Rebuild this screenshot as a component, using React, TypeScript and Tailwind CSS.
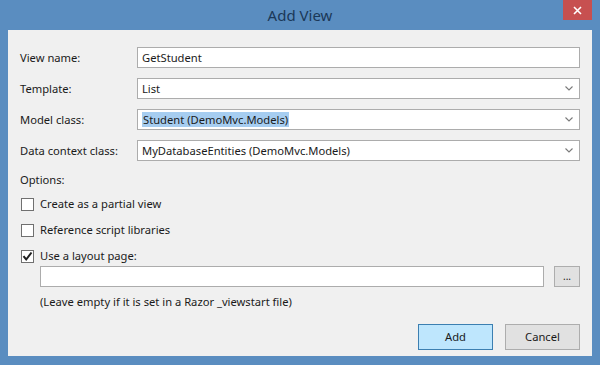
import React from 'react';

// ─── Small pieces ─────────────────────────────────────────────────────────────

const Chevron: React.FC = () => (
  <svg width="8" height="5" viewBox="0 0 8 5" className="shrink-0" aria-hidden="true">
    <path d="M0.5 0.5 L4 4 L7.5 0.5" fill="none" stroke="#7a7a7a" strokeWidth="1.1" />
  </svg>
);

interface FieldRowProps {
  label: string;
  value: string;
  combo?: boolean;
  selected?: boolean;
}

const FieldRow: React.FC<FieldRowProps> = (props) => {
  const valueClass = props.selected
    ? 'bg-[#a6cdf0] text-[#1a1a1a] px-[1px] leading-[15px]'
    : 'text-[#1a1a1a]';
  return (
    <div className="flex items-center h-[21px]">
      <div className="w-[117px] shrink-0 text-[#1a1a1a]">{props.label}</div>
      <div className="flex-1 h-full flex items-center justify-between bg-white border border-[#acacac] pl-[4px] pr-[6px]">
        <span className={valueClass}>{props.value}</span>
        {props.combo && <Chevron />}
      </div>
    </div>
  );
};

interface CheckRowProps {
  label: string;
  checked?: boolean;
}

const CheckRow: React.FC<CheckRowProps> = (props) => (
  <div className="flex items-center h-[16px] gap-[6px]">
    <div className="w-[13px] h-[13px] bg-white border border-[#707070] flex items-center justify-center">
      {props.checked && (
        <svg width="11" height="11" viewBox="0 0 11 11" aria-hidden="true">
          <path d="M1.5 5.2 L4.2 8.5 L9.5 1.5" fill="none" stroke="#1f1f1f" strokeWidth="2" />
        </svg>
      )}
    </div>
    <span className="text-[#1a1a1a]">{props.label}</span>
  </div>
);

// ─── Dialog ───────────────────────────────────────────────────────────────────

export default function App() {
  return (
    <div
      className="w-[600px] h-[365px] bg-[#5a8dc0] flex flex-col px-[8px] pb-[9px] text-[11.2px]"
      style={{ fontFamily: '"Noto Sans", "Open Sans", sans-serif' }}
    >
      {/* Title bar */}
      <div className="h-[30px] grid grid-cols-[1fr_auto_1fr] items-start shrink-0">
        <div />
        <div className="pt-[5px] text-[15px] leading-[20px] text-[#1b3858]">Add View</div>
        <div className="flex justify-end">
          <div className="w-[29px] h-[20px] bg-[#c75050] flex items-center justify-center">
            <svg width="9" height="9" viewBox="0 0 9 9" aria-hidden="true">
              <path d="M1 1 L8 8 M8 1 L1 8" stroke="#ffffff" strokeWidth="1.6" />
            </svg>
          </div>
        </div>
      </div>

      {/* Body */}
      <div className="flex-1 bg-[#f0f0f0] flex flex-col pl-[12px] pr-[12px] pt-[17px] pb-[6px] leading-[16px]">
        <div className="flex flex-col gap-[10px]">
          <FieldRow label="View name:" value="GetStudent" />
          <FieldRow label="Template:" value="List" combo />
          <FieldRow label="Model class:" value="Student (DemoMvc.Models)" combo selected />
          <FieldRow label="Data context class:" value="MyDatabaseEntities (DemoMvc.Models)" combo />
        </div>

        <div className="mt-[11px] text-[#1a1a1a]">Options:</div>

        <div className="flex flex-col gap-[10px] mt-[8px] pl-[1px]">
          <CheckRow label="Create as a partial view" />
          <CheckRow label="Reference script libraries" />
          <CheckRow label="Use a layout page:" checked />
        </div>

        <div className="flex items-center gap-[10px] mt-[2px] pl-[20px]">
          <div className="flex-1 h-[21px] bg-white border border-[#acacac]" />
          <div className="w-[26px] h-[21px] bg-[#e1e1e1] border border-[#adadad] flex items-center justify-center text-[10px] leading-none text-[#1a1a1a] pb-[2px]">
            ...
          </div>
        </div>

        <div className="mt-[7px] pl-[20px] text-[#1a1a1a]">
          (Leave empty if it is set in a Razor _viewstart file)
        </div>

        <div className="mt-auto flex justify-end gap-[12px]">
          <div className="w-[75px] h-[26px] bg-[#bee6fd] border border-[#3c7fb1] flex items-center justify-center text-[#1a1a1a]">
            Add
          </div>
          <div className="w-[75px] h-[26px] bg-[#e1e1e1] border border-[#adadad] flex items-center justify-center text-[#1a1a1a]">
            Cancel
          </div>
        </div>
      </div>
    </div>
  );
}
